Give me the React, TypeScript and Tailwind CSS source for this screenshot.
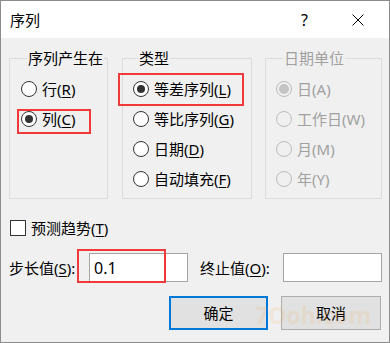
import React from "react";

const font = { fontFamily: '"Noto Sans", "Noto Sans CJK SC", sans-serif' };

function Radio({ checked, disabled, label, acc }: { checked?: boolean; disabled?: boolean; label: string; acc: string }) {
  return (
    <div className="flex items-center h-[30px]">
      <span
        className={
          "w-[16px] h-[16px] rounded-full border flex items-center justify-center shrink-0 " +
          (disabled ? "border-[#bcbcbc] bg-[#f0f0f0]" : "border-[#333333] bg-white")
        }
      >
        {checked && (
          <span className={"rounded-full " + (disabled ? "w-[10px] h-[10px] bg-[#c4c4c4]" : "w-[8px] h-[8px] bg-[#333333]")} />
        )}
      </span>
      <span className={"ml-[5px] text-[15px] leading-[20px] whitespace-nowrap " + (disabled ? "text-[#a0a0a0]" : "text-black")}>
        {label}(<span className={disabled ? "" : "underline underline-offset-2"}>{acc}</span>)
      </span>
    </div>
  );
}

export default function App() {
  return (
    <div className="relative w-[390px] h-[343px] border border-[#8c8c8c] bg-[#f0f0f0] overflow-hidden" style={font}>
      {/* title bar */}
      <div className="h-[37px] bg-white flex items-center">
        <span className="ml-[9px] text-[15px] leading-[20px] text-black">序列</span>
        <span className="ml-auto mr-[44px] text-[16px] leading-[20px] text-black">?</span>
        <svg width="12" height="12" viewBox="0 0 12 12" className="mr-[25px]">
          <path d="M0.5 0.5 L11.5 11.5 M11.5 0.5 L0.5 11.5" stroke="#000" strokeWidth="1" />
        </svg>
      </div>

      {/* groups */}
      <div className="flex mt-[10px] ml-[8px]">
        <fieldset className="w-[99px] h-[151px] border border-[#dcdcdc] pl-[11px] pt-[6px]">
          <legend className="ml-[6px] px-[1px] text-[15px] leading-[20px] text-black">序列产生在</legend>
          <Radio label="行" acc="R" />
          <Radio label="列" acc="C" checked />
        </fieldset>
        <fieldset className="ml-[14px] w-[130px] h-[151px] border border-[#dcdcdc] pl-[10px] pt-[6px]">
          <legend className="ml-[5px] px-[1px] text-[15px] leading-[20px] text-black">类型</legend>
          <Radio label="等差序列" acc="L" checked />
          <Radio label="等比序列" acc="G" />
          <Radio label="日期" acc="D" />
          <Radio label="自动填充" acc="F" />
        </fieldset>
        <fieldset className="ml-[13px] w-[117px] h-[151px] border border-[#dcdcdc] pl-[10px] pt-[6px]">
          <legend className="ml-[7px] px-[1px] text-[15px] leading-[20px] text-[#a0a0a0]">日期单位</legend>
          <Radio label="日" acc="A" checked disabled />
          <Radio label="工作日" acc="W" disabled />
          <Radio label="月" acc="M" disabled />
          <Radio label="年" acc="Y" disabled />
        </fieldset>
      </div>

      {/* checkbox */}
      <div className="flex items-center h-[20px] mt-[19px] ml-[9px]">
        <span className="w-[16px] h-[16px] border border-[#333333] bg-white shrink-0" />
        <span className="ml-[5px] text-[15px] leading-[20px] text-black">
          预测趋势(<span className="underline underline-offset-2">T</span>)
        </span>
      </div>

      {/* inputs */}
      <div className="flex items-center mt-[15px] ml-[8px]">
        <span className="w-[80px] text-[15px] leading-[20px] text-black whitespace-nowrap">
          步长值(<span className="underline underline-offset-2">S</span>):
        </span>
        <div className="w-[99px] h-[29px] border border-[#a5a5a5] bg-white flex items-center pl-[4px] text-[16px] text-black">0.1</div>
        <span className="ml-[12px] w-[83px] text-[15px] leading-[20px] text-black whitespace-nowrap">
          终止值(<span className="underline underline-offset-2">O</span>):
        </span>
        <div className="w-[99px] h-[29px] border border-[#a5a5a5] bg-white" />
      </div>

      {/* buttons */}
      <div className="flex mt-[14px] ml-[168px]">
        <div className="w-[99px] h-[34px] border-2 border-[#0078d7] bg-[#e1e1e1] flex items-center justify-center text-[15px] text-black">
          确定
        </div>
        <div className="ml-[13px] w-[100px] h-[34px] border border-[#adadad] bg-[#e1e1e1] flex items-center justify-center text-[15px] text-black">
          取消
        </div>
      </div>

      {/* watermark */}
      <div className="absolute left-[254px] top-[300px] text-[23px] font-bold leading-[28px] text-[#f4a03c] opacity-[0.12] pointer-events-none whitespace-nowrap">
        7Ooh.com
      </div>

      {/* red annotation boxes */}
      <div className="absolute left-[16px] top-[108px] w-[74px] h-[25px] border-2 border-[#ee3a3a] pointer-events-none" />
      <div className="absolute left-[117px] top-[72px] w-[126px] h-[33px] border-2 border-[#ee3a3a] pointer-events-none" />
      <div className="absolute left-[76px] top-[248px] w-[89px] h-[34px] border-2 border-[#ee3a3a] pointer-events-none" />
    </div>
  );
}
